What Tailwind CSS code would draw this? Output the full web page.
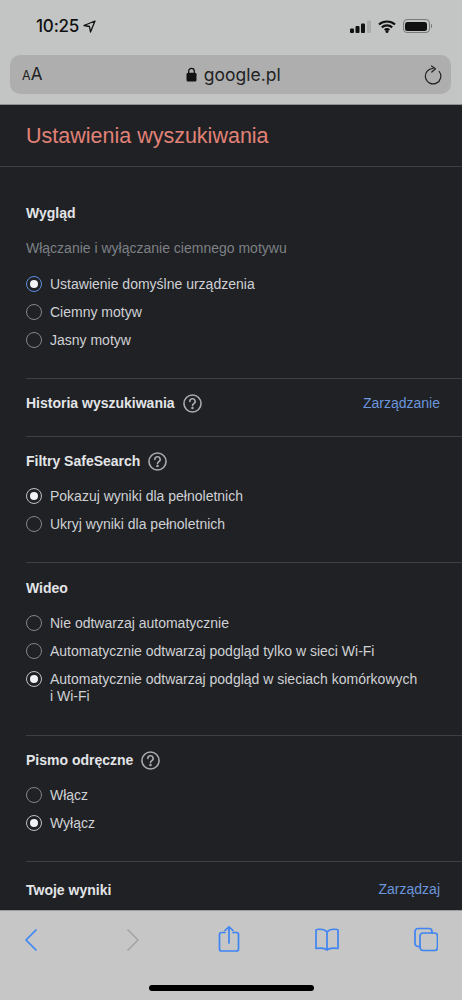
<!DOCTYPE html>
<html lang="pl">
<head>
    <meta charset="UTF-8">
    <meta name="viewport" content="width=device-width, initial-scale=1.0">
    <title>Ustawienia wyszukiwania</title>
    <script src="https://cdn.jsdelivr.net/npm/@tailwindcss/browser@4"></script>
</head>
<body class="bg-[#202124]">
<div class="flex flex-col w-[462px] h-[1000px] overflow-hidden font-['Liberation_Sans',sans-serif]">

    <!-- Status bar + adres -->
    <div class="h-[105px] shrink-0 bg-[#c3c5c4] border-b border-[#8e908f] text-[#111]">
        <div class="h-[55px] flex items-center pl-[36px] pr-[30px] pb-[3px] font-['Inter',sans-serif]">
            <span class="text-[17px] font-medium leading-none tracking-[-0.2px]">10:25</span>
            <svg class="ml-[4px] w-[13px] h-[13px]" viewBox="0 0 13 13" fill="none" stroke="#111" stroke-width="1.300" stroke-linejoin="round"><path d="M12 1 1 5.500l5.500 1L7.500 12z"/></svg>
            <svg class="ml-auto w-[21px] h-[13px]" viewBox="0 0 21 13" fill="#111"><rect x="0" y="8.500" width="4" height="4.500" rx="1"/><rect x="5.500" y="6" width="4" height="7" rx="1"/><rect x="11" y="3.500" width="4" height="9.500" rx="1"/><rect x="17" y="0.500" width="4" height="12.500" rx="1" fill="#a9abaa"/></svg>
            <svg class="ml-[7px] w-[18px] h-[13px]" viewBox="0 0 18 13" fill="none" stroke="#111" stroke-width="2.200"><path d="M1 4.500C5.500.5 12.500.5 17 4.500"/><path d="M3.800 7.400c3-2.600 7.400-2.600 10.400 0"/><path d="M6.600 10c1.400-1.100 3.400-1.100 4.800 0"/><circle cx="9" cy="11.400" r="1.500" fill="#111" stroke="none"/></svg>
            <div class="ml-[7px] flex items-center">
                <div class="w-[27px] h-[14px] rounded-[4px] border border-[#77797a] p-[1.500px]"><div class="w-full h-full rounded-[2.500px] bg-[#111]"></div></div>
                <div class="ml-[1px] w-[1.500px] h-[4px] rounded-r-sm bg-[#77797a]"></div>
            </div>
        </div>
        <div class="mx-[10px] w-[441px] h-[39px] rounded-[10px] bg-[#aeaeae] flex items-center pl-[12px] pr-[9px]">
            <span class="font-['Inter',sans-serif] leading-none flex items-baseline text-[#222]"><span class="text-[12.500px]">A</span><span class="text-[17px]">A</span></span>
            <div class="flex-1 flex items-center justify-center font-['Inter',sans-serif]">
                <svg class="w-[11px] h-[15px]" viewBox="0 0 11 15" fill="#111"><path d="M2.700 6.500V4.200a2.800 2.800 0 0 1 5.600 0v2.300" fill="none" stroke="#111" stroke-width="1.300"/><rect x="0.500" y="5.800" width="10" height="8.700" rx="1.500"/></svg>
                <span class="ml-[7px] text-[17.500px] leading-none text-[#222]">google.pl</span>
            </div>
            <svg class="w-[18px] h-[20px]" viewBox="0 0 18 20" fill="none" stroke="#222" stroke-width="1.200" stroke-linecap="round" stroke-linejoin="round"><path d="M9 3.500A7.700 7.700 0 1 0 15.200 6.500"/><path d="M7.500 1 11.500 3.700 7.800 7"/></svg>
        </div>
    </div>

    <!-- Ustawienia -->
    <main class="flex-1 overflow-hidden bg-[#202124] text-[14px] text-[#e3e5e8]">
        <div class="h-[62px] border-b border-[#3c4043] pl-[26px] flex items-center pt-[3px]">
            <h1 class="text-[21.500px] leading-none text-[#e08277]">Ustawienia wyszukiwania</h1>
        </div>

        <section class="ml-[26px] pr-[22px] pt-[36px] pb-[24px] border-b border-[#3c4043]">
            <h2 class="h-5 leading-5 font-bold">Wygląd</h2>
            <p class="mt-[15px] h-5 leading-5 text-[#7c8085]">Włączanie i wyłączanie ciemnego motywu</p>
            <div class="mt-[12px]">
                <label class="h-7 flex items-center gap-2 text-[#cfd1d5]">
                    <span class="w-4 h-4 rounded-full border-[1.500px] border-[#5f8fe0] flex items-center justify-center"><span class="w-2 h-2 rounded-full bg-[#f1f3f4]"></span></span>
                    Ustawienie domyślne urządzenia
                </label>
                <label class="h-7 flex items-center gap-2 text-[#cfd1d5]">
                    <span class="w-4 h-4 rounded-full border-[1.500px] border-[#80868b]"></span>
                    Ciemny motyw
                </label>
                <label class="h-7 flex items-center gap-2 text-[#cfd1d5]">
                    <span class="w-4 h-4 rounded-full border-[1.500px] border-[#80868b]"></span>
                    Jasny motyw
                </label>
            </div>
        </section>

        <section class="ml-[26px] pr-[22px] pt-[14px] pb-[22px] border-b border-[#3c4043] flex items-center justify-between">
            <h2 class="h-5 flex items-center font-bold">
                Historia wyszukiwania
                <svg class="ml-[8px] w-[19px] h-[19px]" viewBox="0 0 18 18" fill="none" stroke="#a8abb0" stroke-width="1.500" stroke-linecap="round"><circle cx="9" cy="9" r="8.100"/><path d="M6.500 7a2.500 2.500 0 1 1 3.700 2.200C9.400 9.700 9 10 9 11"/><circle cx="9" cy="13.300" r="0.500" fill="#a8abb0"/></svg>
            </h2>
            <a class="text-[#6b96dc]">Zarządzanie</a>
        </section>

        <section class="ml-[26px] pr-[22px] pt-[14px] pb-[24px] border-b border-[#3c4043]">
            <h2 class="h-5 flex items-center font-bold">
                Filtry SafeSearch
                <svg class="ml-[8px] w-[19px] h-[19px]" viewBox="0 0 18 18" fill="none" stroke="#a8abb0" stroke-width="1.500" stroke-linecap="round"><circle cx="9" cy="9" r="8.100"/><path d="M6.500 7a2.500 2.500 0 1 1 3.700 2.200C9.400 9.700 9 10 9 11"/><circle cx="9" cy="13.300" r="0.500" fill="#a8abb0"/></svg>
            </h2>
            <div class="mt-[11px]">
                <label class="h-7 flex items-center gap-2 text-[#cfd1d5]">
                    <span class="w-4 h-4 rounded-full border-[1.500px] border-[#bdc1c6] flex items-center justify-center"><span class="w-2 h-2 rounded-full bg-[#f1f3f4]"></span></span>
                    Pokazuj wyniki dla pełnoletnich
                </label>
                <label class="h-7 flex items-center gap-2 text-[#cfd1d5]">
                    <span class="w-4 h-4 rounded-full border-[1.500px] border-[#80868b]"></span>
                    Ukryj wyniki dla pełnoletnich
                </label>
            </div>
        </section>

        <section class="ml-[26px] pr-[22px] pt-[15px] pb-[30px] border-b border-[#3c4043]">
            <h2 class="h-5 leading-5 font-bold">Wideo</h2>
            <div class="mt-[11px]">
                <label class="h-7 flex items-center gap-2 text-[#cfd1d5]">
                    <span class="w-4 h-4 rounded-full border-[1.500px] border-[#80868b]"></span>
                    Nie odtwarzaj automatycznie
                </label>
                <label class="h-7 flex items-center gap-2 text-[#cfd1d5]">
                    <span class="w-4 h-4 rounded-full border-[1.500px] border-[#80868b]"></span>
                    Automatycznie odtwarzaj podgląd tylko w sieci Wi-Fi
                </label>
                <label class="flex items-start gap-2 pt-[6px] text-[#cfd1d5]">
                    <span class="w-4 h-4 shrink-0 rounded-full border-[1.500px] border-[#bdc1c6] flex items-center justify-center"><span class="w-2 h-2 rounded-full bg-[#f1f3f4]"></span></span>
                    <span class="leading-[17px]">Automatycznie odtwarzaj podgląd w sieciach komórkowych i&nbsp;Wi-Fi</span>
                </label>
            </div>
        </section>

        <section class="ml-[26px] pr-[22px] pt-[14px] pb-[24px] border-b border-[#3c4043]">
            <h2 class="h-5 flex items-center font-bold">
                Pismo odręczne
                <svg class="ml-[8px] w-[19px] h-[19px]" viewBox="0 0 18 18" fill="none" stroke="#a8abb0" stroke-width="1.500" stroke-linecap="round"><circle cx="9" cy="9" r="8.100"/><path d="M6.500 7a2.500 2.500 0 1 1 3.700 2.200C9.400 9.700 9 10 9 11"/><circle cx="9" cy="13.300" r="0.500" fill="#a8abb0"/></svg>
            </h2>
            <div class="mt-[11px]">
                <label class="h-7 flex items-center gap-2 text-[#cfd1d5]">
                    <span class="w-4 h-4 rounded-full border-[1.500px] border-[#80868b]"></span>
                    Włącz
                </label>
                <label class="h-7 flex items-center gap-2 text-[#cfd1d5]">
                    <span class="w-4 h-4 rounded-full border-[1.500px] border-[#bdc1c6] flex items-center justify-center"><span class="w-2 h-2 rounded-full bg-[#f1f3f4]"></span></span>
                    Wyłącz
                </label>
            </div>
        </section>

        <section class="ml-[26px] pr-[22px] pt-[17px] flex items-center justify-between">
            <h2 class="h-5 leading-5 font-bold">Twoje wyniki</h2>
            <a class="text-[#6b96dc]">Zarządzaj</a>
        </section>
    </main>

    <!-- Pasek Safari -->
    <div class="h-[90px] shrink-0 bg-[#c5c6c5] border-t border-[#9a9c9b] relative">
        <div class="pl-[19px] pr-[24px] pt-[15px] flex justify-between">
            <svg class="w-6 h-[26px]" viewBox="0 0 24 26" fill="none" stroke="#3f84f3" stroke-width="1.700" stroke-linecap="round" stroke-linejoin="round"><path d="M17 4 7 14l10 10"/></svg>
            <svg class="w-6 h-[26px]" viewBox="0 0 24 26" fill="none" stroke="#a3a5a5" stroke-width="1.700" stroke-linecap="round" stroke-linejoin="round"><path d="m10 4 10 10-10 10"/></svg>
            <svg class="w-6 h-[26px]" viewBox="0 0 24 26" fill="none" stroke="#3f84f3" stroke-width="1.700" stroke-linecap="round" stroke-linejoin="round"><path d="M8 6.500H4.500a2 2 0 0 0-2 2V23a2 2 0 0 0 2 2h15a2 2 0 0 0 2-2V8.500a2 2 0 0 0-2-2H16"/><path d="M12 17V1M8 4.500 12 .8l4 3.700"/></svg>
            <svg class="w-6 h-[26px]" viewBox="0 0 24 26" fill="none" stroke="#3f84f3" stroke-width="1.700" stroke-linecap="round" stroke-linejoin="round"><path d="M12 6C10 3.500 5 3 1.800 3.500Q1 3.600 1 4.500v18c4-.7 9-.5 11 1.500 2-2 7-2.200 11-1.500v-18q0-.9-.8-1C19 3 14 3.500 12 6zM12 6v18"/></svg>
            <svg class="w-6 h-[26px]" viewBox="0 0 24 26" fill="none" stroke="#3f84f3" stroke-width="1.700" stroke-linecap="round" stroke-linejoin="round"><rect x="6" y="7" width="17.500" height="17.500" rx="3"/><path d="M6 20.500H4a3 3 0 0 1-3-3V5.500a3 3 0 0 1 3-3h11a3 3 0 0 1 3 3V7"/></svg>
        </div>
        <div class="absolute left-[149px] bottom-[9px] w-[165px] h-[6px] rounded-full bg-black"></div>
    </div>
</div>
</body>
</html>
